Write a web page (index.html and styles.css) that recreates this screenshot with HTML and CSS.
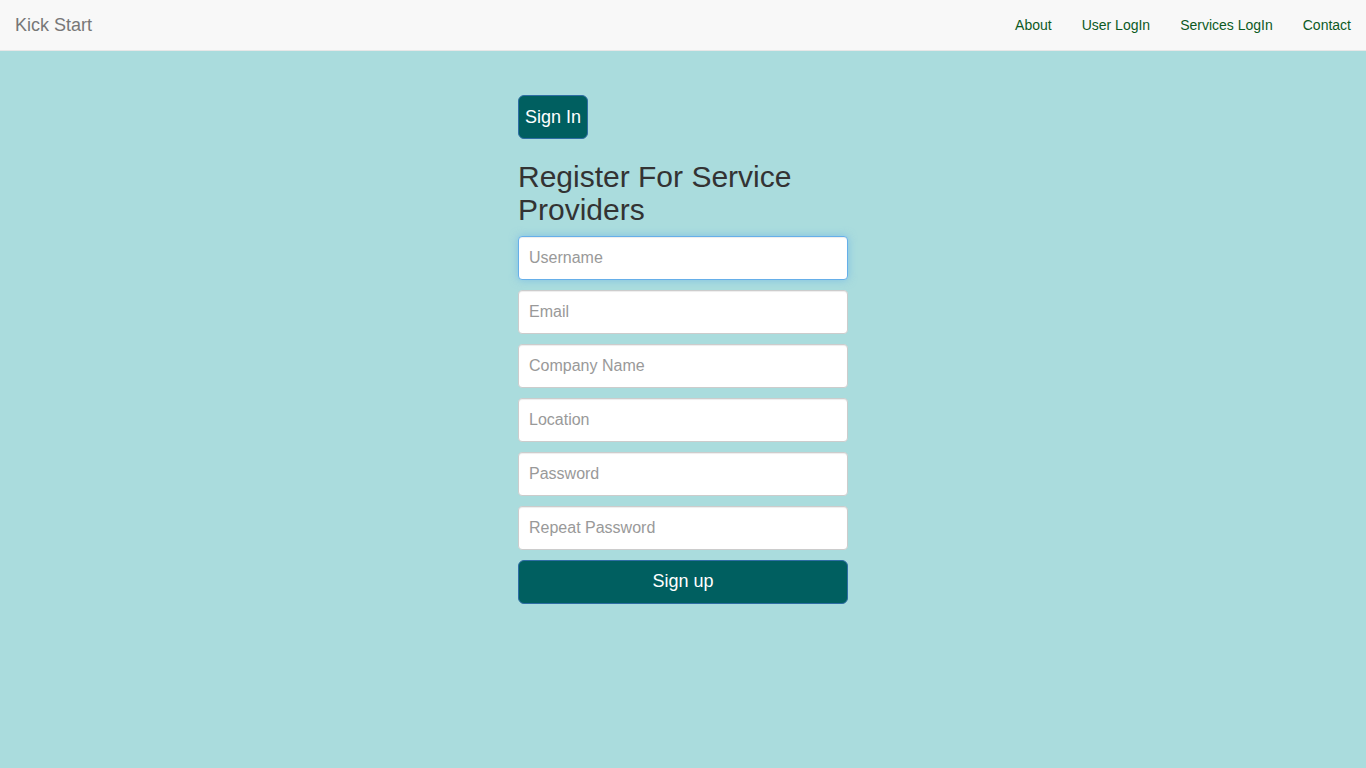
FILE: index.html
```html
<!DOCTYPE html>
<html>
<head>
<meta charset="utf-8">
<title>Kick Start</title>
<link rel="stylesheet" href="styles.css">
</head>
<body>
<nav class="navbar">
  <a class="brand" href="#">Kick Start</a>
  <ul class="nav">
    <li><a href="#">About</a></li>
    <li><a href="#">User LogIn</a></li>
    <li><a href="#">Services LogIn</a></li>
    <li><a href="#">Contact</a></li>
  </ul>
</nav>
<main class="page">
  <div class="form-col">
    <button class="btn btn-signin" type="button">Sign In</button>
    <h2 class="title">Register For Service Providers</h2>
    <form class="form">
      <input class="field focused" type="text" placeholder="Username">
      <input class="field" type="email" placeholder="Email">
      <input class="field" type="text" placeholder="Company Name">
      <input class="field" type="text" placeholder="Location">
      <input class="field" type="password" placeholder="Password">
      <input class="field" type="password" placeholder="Repeat Password">
      <button class="btn btn-block" type="button">Sign up</button>
    </form>
  </div>
</main>
</body>
</html>
```

FILE: styles.css
```css
* { box-sizing: border-box; }
html, body {
  margin: 0;
  padding: 0;
  height: 100%;
}
body {
  font-family: "Liberation Sans", Arial, Helvetica, sans-serif;
  font-size: 14px;
  line-height: 1.42857;
  color: #333;
  background: #aadcdd;
}
.navbar {
  height: 51px;
  background: #f8f8f8;
  border-bottom: 1px solid #e7e7e7;
  display: flex;
  justify-content: space-between;
  align-items: stretch;
}
.brand {
  display: block;
  padding: 15px 15px;
  font-size: 18px;
  line-height: 20px;
  color: #777;
  text-decoration: none;
}
.nav {
  display: flex;
  list-style: none;
  margin: 0;
  padding: 0;
}
.nav a {
  display: block;
  padding: 15px 15px;
  line-height: 20px;
  font-size: 14px;
  color: #0c5a1f;
  text-decoration: none;
}
.page {
  display: flex;
  justify-content: center;
  padding-top: 44px;
}
.form-col {
  width: 330px;
}
.btn {
  display: block;
  font-family: inherit;
  font-size: 18px;
  line-height: 24px;
  color: #fff;
  background: #005f60;
  border: 1px solid #2e6da4;
  border-radius: 6px;
  padding: 9px 6px;
  white-space: nowrap;
  cursor: pointer;
}
.btn-signin {
  width: 70px;
  height: 44px;
  padding: 9px 0;
}
.title {
  margin: 21px 0 10px;
  font-size: 30px;
  font-weight: 500;
  line-height: 33px;
  color: #333;
}
.form {
  display: flex;
  flex-direction: column;
  gap: 10px;
}
.field {
  display: block;
  width: 100%;
  height: 44px;
  padding: 10px 10px;
  font-family: inherit;
  font-size: 16px;
  color: #555;
  background: #fff;
  border: 1px solid #ccc;
  border-radius: 4px;
  box-shadow: inset 0 1px 1px rgba(0,0,0,.075);
  outline: none;
}
.field::placeholder { color: #999; }
.field.focused {
  border-color: #66afe9;
  box-shadow: inset 0 1px 1px rgba(0,0,0,.075), 0 0 8px rgba(102,175,233,.6);
}
.btn-block {
  width: 100%;
  height: 44px;
  padding: 8px 6px 10px;
}
```
